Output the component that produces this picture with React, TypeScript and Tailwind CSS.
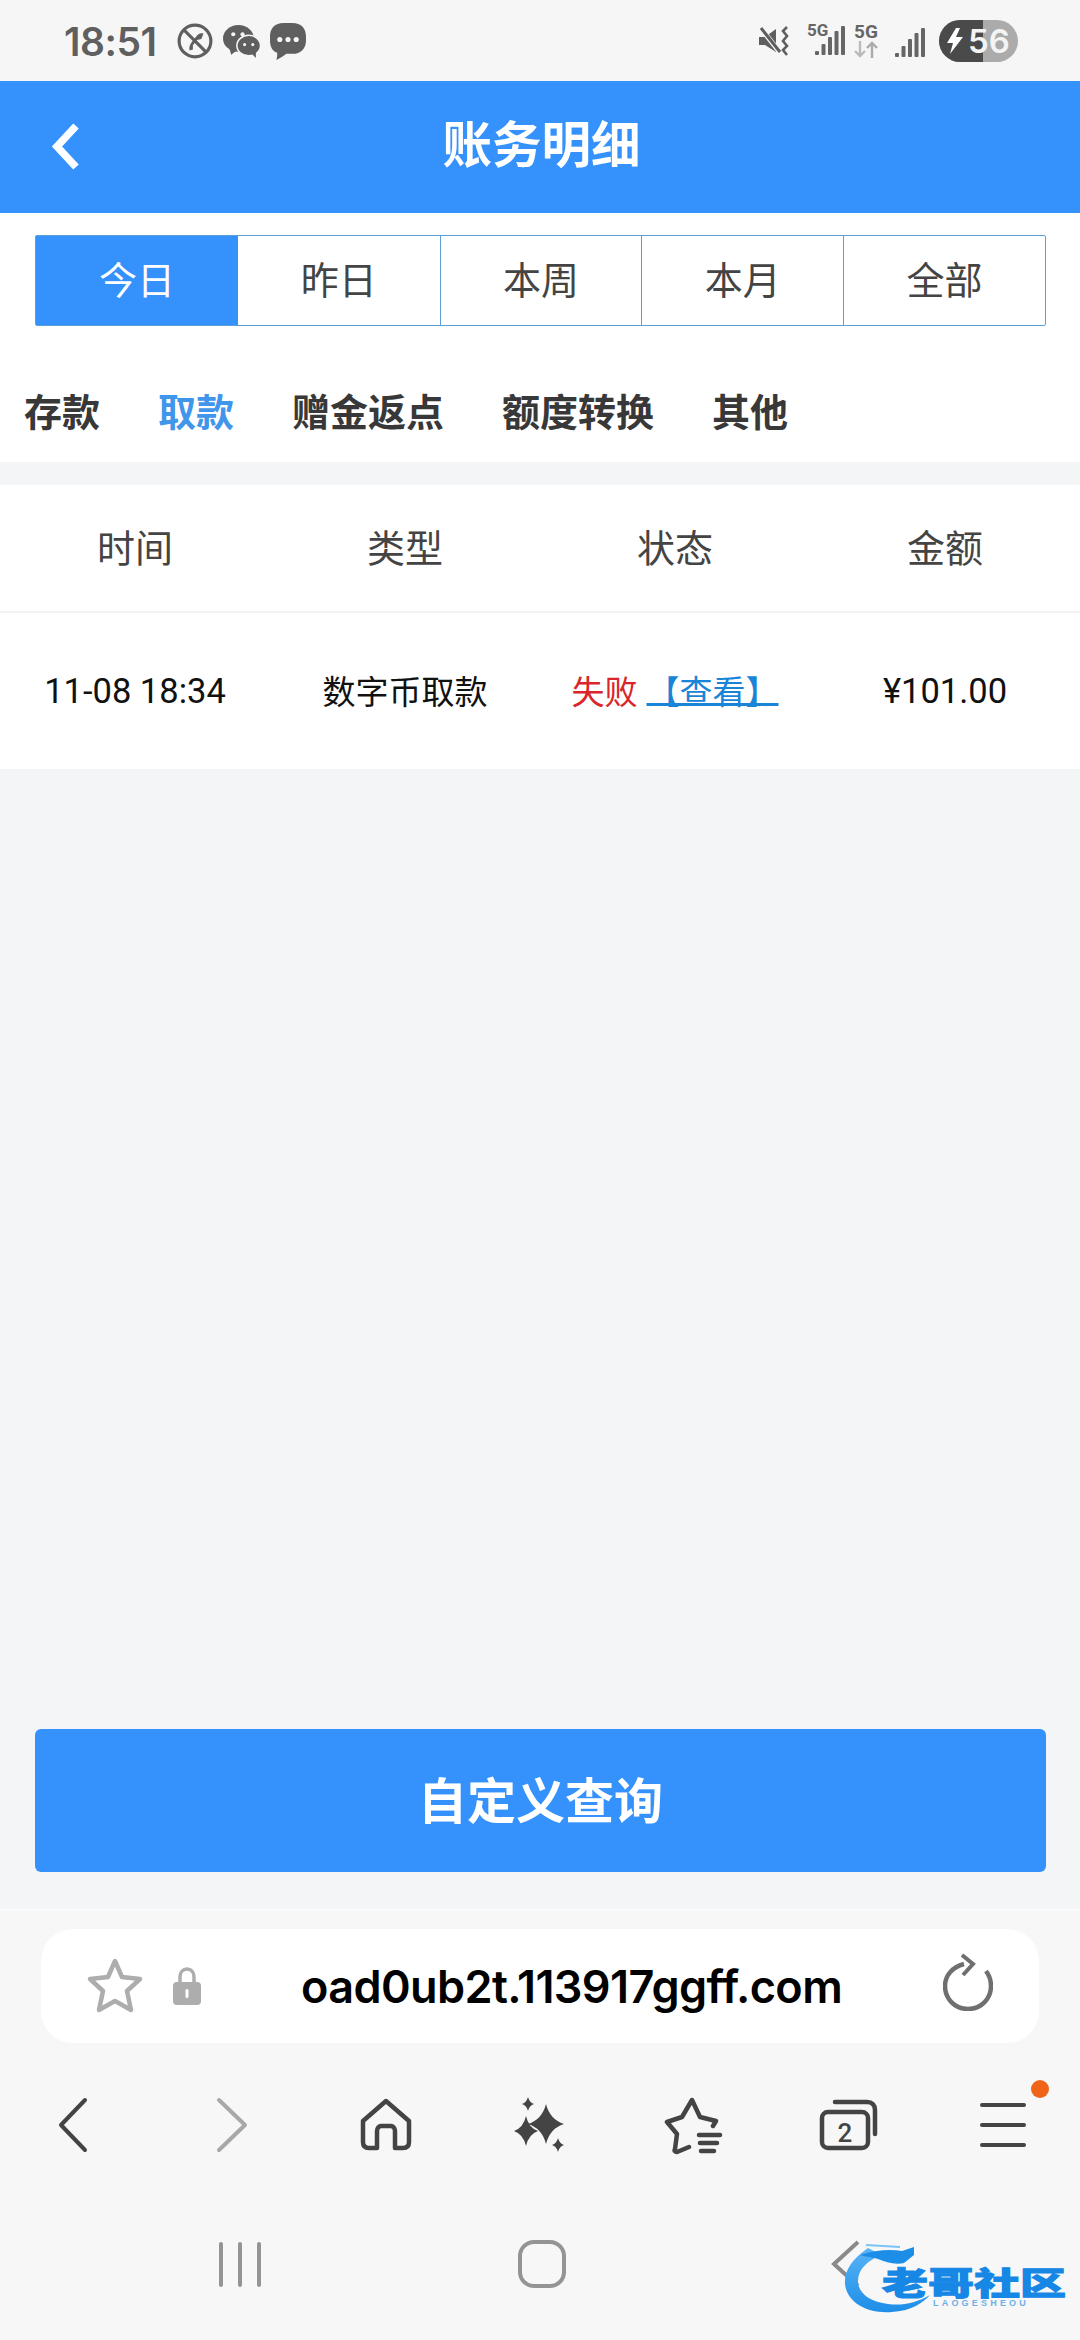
const cjk = "font-['Noto_Sans_CJK_SC',sans-serif]"

const dateTabs = ['今日', '昨日', '本周', '本月', '全部']
const typeTabs = ['存款', '取款', '赠金返点', '额度转换', '其他']
const columns = ['时间', '类型', '状态', '金额']

function star(cx: number, cy: number, rx: number, ry: number) {
  const kx = rx * 0.22
  const ky = ry * 0.22
  return `M${cx} ${cy - ry}Q${cx + kx} ${cy - ky} ${cx + rx} ${cy}Q${cx + kx} ${cy + ky} ${cx} ${cy + ry}Q${cx - kx} ${cy + ky} ${cx - rx} ${cy}Q${cx - kx} ${cy - ky} ${cx} ${cy - ry}Z`
}

function SignalBars() {
  return (
    <svg width="30" height="30" viewBox="0 0 30 30" fill="#666">
      <rect x="0" y="25" width="4" height="4" rx="1" />
      <rect x="6.5" y="18" width="4" height="11" rx="1" />
      <rect x="13" y="11" width="4" height="18" rx="1" />
      <rect x="19.5" y="5" width="4" height="24" rx="1" />
      <rect x="26" y="0" width="4" height="29" rx="1" />
    </svg>
  )
}

function StatusBar() {
  return (
    <div className="h-[81px] shrink-0 flex items-center justify-between pl-[64px] pr-[62px] pt-[1px] bg-[#f6f6f7]">
      <div className="flex items-center">
        <span className="text-[39px] leading-none font-semibold text-[#5f5f5f] font-['Inter',sans-serif] tracking-[-0.5px] w-[113px]">18:51</span>
        <svg width="36" height="36" viewBox="0 0 34 34" fill="none" stroke="#5f5f5f">
          <circle cx="17" cy="17" r="15" strokeWidth="3" />
          <path d="M7 7L27 27" strokeWidth="3" />
          <path d="M25 10C22 9 20 10 18 13L14 18C12 21 11 23 12 26L15 25L15 21L19 16L23 15Z" fill="#5f5f5f" stroke="none" />
        </svg>
        <svg className="ml-[10px]" width="37" height="33" viewBox="0 0 36 32">
          <ellipse cx="15" cy="13" rx="15" ry="13" fill="#5f5f5f" />
          <path d="M6 22L8 29L13 25Z" fill="#5f5f5f" />
          <circle cx="10" cy="9" r="2" fill="#f6f6f7" />
          <circle cx="19" cy="9" r="2" fill="#f6f6f7" />
          <ellipse cx="25" cy="20" rx="11.5" ry="10" fill="#5f5f5f" stroke="#f6f6f7" strokeWidth="1.5" />
          <path d="M28 28L32 32L32 25Z" fill="#5f5f5f" />
          <circle cx="21" cy="19" r="1.5" fill="#f6f6f7" />
          <circle cx="29" cy="19" r="1.5" fill="#f6f6f7" />
        </svg>
        <svg className="ml-[10px]" width="36" height="37" viewBox="0 0 35 36">
          <path d="M13 0H22C30 0 35 5 35 13V17C35 25 30 30 22 30H16C13 32 9 35 6 36C7 34 7 32 7 29C2 27 0 23 0 17V13C0 5 5 0 13 0Z" fill="#5f5f5f" />
          <circle cx="9.5" cy="16" r="2.5" fill="#f6f6f7" />
          <circle cx="17.5" cy="16" r="2.5" fill="#f6f6f7" />
          <circle cx="25.5" cy="16" r="2.5" fill="#f6f6f7" />
        </svg>
      </div>
      <div className="flex items-center">
        <svg width="30" height="30" viewBox="0 0 30 30" fill="none">
          <path d="M0 11H6L17 3V26L6 19H0Z" fill="#5f5f5f" />
          <path d="M1 1L22 28" stroke="#f6f6f7" strokeWidth="5" />
          <path d="M2 2L21 26" stroke="#5f5f5f" strokeWidth="3" />
          <path d="M28 1L24 5L28 10L24 15L28 20L24 24L28 29" stroke="#5f5f5f" strokeWidth="2.6" />
        </svg>
        <div className="ml-[18px] relative w-[37px] h-[36px]">
          <span className="absolute left-0 top-0 text-[17px] leading-[15px] font-bold text-[#666] font-['Roboto',sans-serif]">5G</span>
          <div className="absolute left-[8px] top-[3px]"><SignalBars /></div>
        </div>
        <div className="ml-[10px] w-[24px] h-[36px] flex flex-col items-center">
          <span className="text-[19px] leading-[18px] font-bold text-[#666] font-['Roboto',sans-serif]">5G</span>
          <svg width="24" height="17" viewBox="0 0 24 17" fill="none" strokeWidth="2.4">
            <path d="M6 0V15M1 10L6 15L11 10" stroke="#bbb" />
            <path d="M18 17V2M13 7L18 2L23 7" stroke="#aaa" />
          </svg>
        </div>
        <div className="ml-[17px] mt-[3px]"><SignalBars /></div>
        <div className="ml-[14px] h-[42px] w-[79px] rounded-full overflow-hidden relative flex bg-[#ababab]">
          <div className="w-[44px] h-full bg-[#4a4a4a]" />
          <svg className="absolute left-[8px] top-[8px]" width="16" height="26" viewBox="0 0 16 26">
            <path d="M9 0L0 15H6L3 26L16 9H9L13 0Z" fill="#fff" />
          </svg>
          <span className="absolute left-[29px] top-0 h-full flex items-center text-[33px] leading-none font-semibold text-[#f4f4f4] font-['Inter',sans-serif]">56</span>
        </div>
      </div>
    </div>
  )
}

function Header() {
  return (
    <div className="h-[132px] shrink-0 grid grid-cols-[1fr_auto_1fr] items-center bg-[#3592fd]">
      <svg className="ml-[50px]" width="32" height="52" viewBox="0 0 32 52" fill="none">
        <path d="M26 5L7 25.5L26 46" stroke="#fff" strokeWidth="7.5" />
      </svg>
      <h1 className={`${cjk} mb-[10px] ml-[3px] text-[49.5px] leading-none font-bold text-white`}>账务明细</h1>
      <div />
    </div>
  )
}

function FilterPanel() {
  return (
    <div className="bg-white h-[249px] shrink-0 flex flex-col">
      <div className="mt-[22px] ml-[35px] mr-[34px] h-[91px] grid grid-cols-5 border border-[#5a9fd8] rounded-[2px]">
        {dateTabs.map((tab, i) => (
          <div
            key={tab}
            className={`${cjk} pb-[7px] flex items-center justify-center text-[38px] ${i === 0 ? 'bg-[#3592fd] text-white' : 'text-[#444] border-l border-[#5a9fd8]'} ${i === 1 ? 'border-l-0' : ''}`}
          >
            {tab}
          </div>
        ))}
      </div>
      <div className="flex-1 flex items-center gap-[58px] pl-[24px] pt-[31px]">
        {typeTabs.map((tab, i) => (
          <span key={tab} className={`${cjk} text-[38px] leading-none font-bold ${i === 1 ? 'text-[#3f96ea]' : 'text-[#383838]'}`}>
            {tab}
          </span>
        ))}
      </div>
    </div>
  )
}

function RecordTable() {
  return (
    <div className="mt-[23px] bg-white">
      <div className="h-[128px] grid grid-cols-4 items-center border-b-2 border-[#f3f3f3]">
        {columns.map((col) => (
          <div key={col} className={`${cjk} pb-[5px] text-center text-[38px] text-[#444]`}>{col}</div>
        ))}
      </div>
      <div className="h-[156px] grid grid-cols-4 items-center text-[#111]">
        <div className="pt-[2px] text-center text-[34.5px] font-['Roboto',sans-serif]">11-08 18:34</div>
        <div className={`${cjk} text-center text-[33px]`}>数字币取款</div>
        <div className={`${cjk} text-center text-[33px] whitespace-nowrap`}>
          <span className="text-[#d9252b]">失败</span>
          <span className="ml-[9px] text-[#1a84d6] underline decoration-[3px] underline-offset-[-1px]">【查看】</span>
        </div>
        <div className="pt-[2px] text-center text-[34.5px] font-['Roboto',sans-serif]">¥101.00</div>
      </div>
    </div>
  )
}

function UrlBar() {
  return (
    <div className="mt-[18px] mx-[41px] h-[114px] rounded-[32px] bg-white flex items-center pl-[45px] pr-[46px]">
      <svg width="58" height="56" viewBox="0 0 58 56" fill="none">
        <path d="M29 3L36 19L54 21L41 33L45 52L29 43L13 52L17 33L4 21L22 19Z" stroke="#adadad" strokeWidth="4.5" strokeLinejoin="round" />
      </svg>
      <svg className="ml-[29px]" width="28" height="38" viewBox="0 0 28 38" fill="none">
        <path d="M7 17V10C7 5 10 2 14 2C18 2 21 5 21 10V17" stroke="#adadad" strokeWidth="3.5" />
        <rect x="0" y="15" width="28" height="23" rx="4" fill="#adadad" />
        <rect x="12.5" y="22" width="3" height="9" rx="1.5" fill="#fff" />
      </svg>
      <span className="ml-[100px] text-[45px] leading-none font-semibold text-black font-['Inter',sans-serif] tracking-[-0.6px] whitespace-nowrap">oad0ub2t.113917ggff.com</span>
      <svg className="ml-auto mb-[8px]" width="50" height="58" viewBox="0 0 50 58" fill="none" stroke="#6f6f6f" strokeWidth="4.5">
        <path d="M21 11C9 14 2 23 2 33C2 46 12 56 25 56C38 56 48 46 48 33C48 27 46 22 43 18" />
        <path d="M19 2L30 11L20 22" strokeWidth="4" />
      </svg>
    </div>
  )
}

function BrowserNav() {
  const dark = '#444'
  return (
    <div className="mt-[52px] grid grid-cols-7 justify-items-center h-[60px]">
      <svg width="60" height="60" viewBox="0 0 60 60" fill="none" stroke={dark} strokeWidth="4" strokeLinecap="round" strokeLinejoin="round">
        <path d="M38 5L14 30L38 55" />
      </svg>
      <svg width="60" height="60" viewBox="0 0 60 60" fill="none" stroke="#a8a8a8" strokeWidth="4" strokeLinecap="round" strokeLinejoin="round">
        <path d="M18 5L44 30L18 55" />
      </svg>
      <svg width="60" height="60" viewBox="0 0 60 60" fill="none" stroke={dark} strokeWidth="4.5" strokeLinejoin="round">
        <path d="M30 6L53 26V47C53 51 51 53 47 53H39V36C39 33 37 31 35 31H25C23 31 21 33 21 36V53H13C9 53 7 51 7 47V26Z" />
      </svg>
      <svg width="60" height="60" viewBox="0 0 60 60" fill={dark}>
        <path d={star(36, 29, 18, 20)} />
        <path d={star(16, 36, 12, 15)} />
        <path d={star(18, 9, 6, 7)} />
        <path d={star(48, 50, 6, 7)} />
      </svg>
      <svg width="60" height="60" viewBox="0 0 60 60" fill="none" stroke={dark} strokeWidth="4.5" strokeLinecap="round" strokeLinejoin="round">
        <path d="M25 52L13 57C11 57 10 56 11 54L13 39L3 27L18 22L28 5L36 22L52 26L49 31" />
        <path d="M35 40H56M36 48H53M37 56H50" />
      </svg>
      <svg width="60" height="60" viewBox="0 0 60 60" fill="none" stroke={dark} strokeWidth="4.5" strokeLinecap="round">
        <rect x="3" y="17" width="46" height="36" rx="6" />
        <path d="M16 7H48C53 7 56 10 56 15V39" />
        <text x="26" y="47" fontSize="26" fontWeight="500" textAnchor="middle" fill={dark} stroke="none" fontFamily="Roboto, sans-serif">2</text>
      </svg>
      <div className="relative w-[60px] h-[60px] flex flex-col justify-between pl-[7px] py-[8px]">
        <div className="w-[46px] h-[4px] rounded-full bg-[#444]" />
        <div className="w-[46px] h-[4px] rounded-full bg-[#444]" />
        <div className="w-[46px] h-[4px] rounded-full bg-[#444]" />
        <div className="absolute left-[58px] top-[-15px] w-[18px] h-[18px] rounded-full bg-[#f0641a]" />
      </div>
    </div>
  )
}

function SystemNav() {
  return (
    <div className="mt-[85px] grid grid-cols-3 justify-items-center pl-[89px] pr-[84px]">
      <div className="h-[48px] flex items-center gap-[15px]">
        <div className="w-[4px] h-[45px] rounded-full bg-[#949494]" />
        <div className="w-[4px] h-[45px] rounded-full bg-[#949494]" />
        <div className="w-[4px] h-[45px] rounded-full bg-[#949494]" />
      </div>
      <div className="w-[48px] h-[48px] rounded-[16px] border-[4px] border-[#949494]" />
      <svg width="30" height="48" viewBox="0 0 30 48" fill="none" stroke="#8a8a8a" strokeWidth="4">
        <path d="M28 2L4 24L28 46" />
      </svg>
    </div>
  )
}

function Watermark() {
  return (
    <div className="absolute left-[830px] top-[2235px] w-[250px] h-[85px]">
      <svg className="absolute left-0 top-0" width="250" height="85" viewBox="0 0 250 85">
        <defs>
          <linearGradient id="drag" x1="0" y1="0" x2="0" y2="1">
            <stop offset="0" stopColor="#59b4f6" />
            <stop offset="1" stopColor="#1d8ee8" />
          </linearGradient>
        </defs>
        <path d="M38 13C22 24 14 36 15 49C17 68 38 79 62 77C80 76 92 69 100 60C86 68 72 71 58 69C40 67 28 58 28 46C28 34 38 25 52 20L38 13Z" fill="url(#drag)" />
        <path d="M30 20C45 15 60 14 72 16L84 12L84 20L74 28C64 30 56 27 48 24C42 22 36 22 30 20Z" fill="#1d8ee8" />
        <path d="M36 10L70 12" stroke="#7cc4f8" strokeWidth="2" />
      </svg>
      <div className="absolute left-[52px] top-[26px] flex w-[182px] justify-between scale-y-[0.68] font-['Noto_Sans_CJK_SC',sans-serif] text-[46px] leading-[40px] font-black text-[#1787e6] [-webkit-text-stroke:1.5px_#1787e6]">
        <span>老</span><span>哥</span><span>社</span><span>区</span>
      </div>
      <div className="absolute left-[103px] top-[63px] w-[112px] text-[9px] leading-[10px] font-bold text-[#6db0e8] tracking-[3.2px] whitespace-nowrap font-['Liberation_Sans',sans-serif]">LAOGESHEOU</div>
    </div>
  )
}

export default function App() {
  return (
    <div className="relative w-[1080px] h-[2340px] overflow-hidden flex flex-col bg-[#f4f5f7]">
      <StatusBar />
      <Header />
      <FilterPanel />
      <div className="flex-1 flex flex-col">
        <RecordTable />
        <div className="mt-auto ml-[35px] mr-[34px] mb-[37px] h-[143px] rounded-[6px] bg-[#3592fd] flex items-center justify-center">
          <span className={`${cjk} mb-[7px] text-[49px] leading-none font-bold text-white`}>自定义查询</span>
        </div>
      </div>
      <div className="h-[431px] shrink-0 bg-[#f7f7f7] border-t-2 border-[#fbfbfb]">
        <UrlBar />
        <BrowserNav />
        <SystemNav />
      </div>
      <Watermark />
    </div>
  )
}
